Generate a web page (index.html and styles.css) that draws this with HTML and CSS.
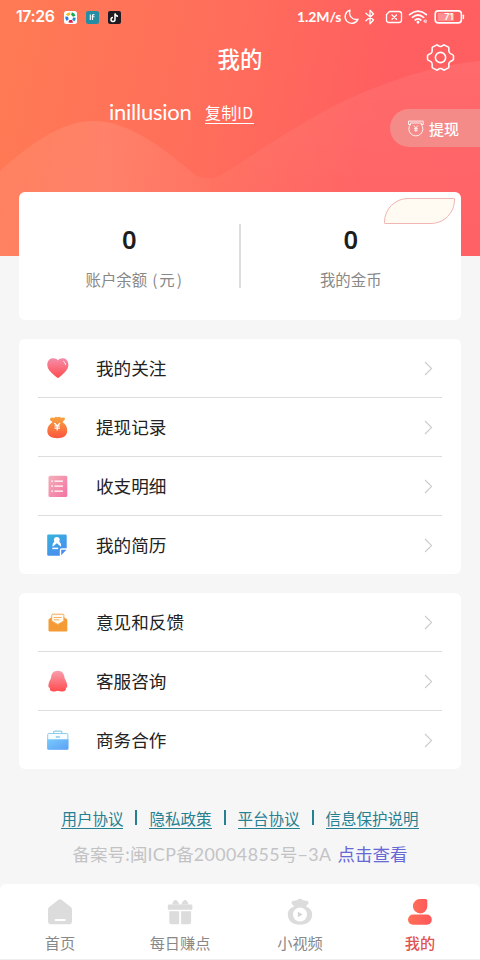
FILE: index.html
```html
<!DOCTYPE html>
<html lang="zh-CN">
<head>
<meta charset="utf-8">
<title>我的</title>
<link rel="stylesheet" href="styles.css">
</head>
<body>
<div class="screen">
  <header class="hero">
    <svg class="waves" viewBox="0 0 480 256" preserveAspectRatio="none">
      <defs>
        <linearGradient id="w1" x1="0" y1="0" x2="0" y2="1"><stop offset="0" stop-color="#fff" stop-opacity=".07"/><stop offset="1" stop-color="#fff" stop-opacity=".02"/></linearGradient>
        <linearGradient id="w2" x1="0" y1="0" x2="1" y2="0"><stop offset="0" stop-color="#fff" stop-opacity=".07"/><stop offset=".5" stop-color="#fff" stop-opacity=".1"/><stop offset="1" stop-color="#fff" stop-opacity=".05"/></linearGradient>
      </defs>
      <path fill="url(#w2)" d="M0 171C28 146 60 121 94 121C130 121 165 150 193 173Q201 180 210 178V256H0Z"/>
      <path fill="url(#w1)" d="M210 178Q216 178 221 175C260 151 310 115 364 92C405 75 445 64 480 61V256H210Z"/>
    </svg>
    <div class="status">
      <span class="time">17:26</span>
      <svg class="app" viewBox="0 0 13 13"><rect width="13" height="13" rx="2.5" fill="#fff"/><g fill="none" stroke-width="2.8"><path d="M3 4.4A4.2 4.2 0 0 1 6.2 2.6" stroke="#f4bd20"/><path d="M7.5 2.7A4.2 4.2 0 0 1 10.2 5.3" stroke="#16a55a"/><path d="M10.4 6.6A4.2 4.2 0 0 1 9.2 9.4" stroke="#248dd8"/><path d="M8.5 10.1A4.2 4.2 0 0 1 5 9.9" stroke="#d92046"/><path d="M3.8 9A4.2 4.2 0 0 1 2.7 5.6" stroke="#3478dc"/></g></svg>
      <svg class="app" viewBox="0 0 13 13"><rect width="13" height="13" rx="2" fill="#258da3"/><path d="M4.3 3.5V9M6.5 9V4.8Q6.5 3.4 8.4 3.7M5.7 5.7H8.5" fill="none" stroke="#fff" stroke-width="1.1"/></svg>
      <svg class="app" viewBox="0 0 13 13"><rect width="13" height="13" rx="2" fill="#201b20"/><path d="M7 2.4V8.6A2 2 0 1 1 5 6.6M7 2.4Q7.4 5 10 5.2" fill="none" stroke="#fff" stroke-width="1.5"/></svg>
      <span class="speed">1.2M/s</span>
      <svg class="sys" width="168" height="18" viewBox="0 0 168 18" fill="none" stroke="#fff" stroke-width="1.3" stroke-linejoin="round" stroke-linecap="round">
        <path d="M8 2.2A6.7 6.7 0 1 0 16 11.2C10.7 12.7 6.3 7.9 8 2.2Z"/>
        <path d="M24 5.3L31.5 12L28 15.7V2.3L31.5 6L24 12.7"/>
        <path d="M47.5 3.5H57Q59.5 3.5 59.5 6V12Q59.5 14.5 57 14.5H47Q44.5 14.5 44.5 12V6.5Z"/><path d="M50 7L54.5 11.2M54.5 7L50 11.2"/>
        <path d="M67.6 6.6Q76 -.3 84.4 6.6M70.4 9.3Q76 4.7 81.6 9.3M73.2 12Q76 9.7 78.8 12" stroke-width="1.7"/><circle cx="76" cy="14.2" r=".8" fill="#fff"/>
        <path d="M82 13.2H84.6Q84.4 11.5 83 11.8Q81.6 12.3 82.1 13.8Q82.8 15.3 84.5 14.4" stroke-width=".7"/>
        <rect x="93.2" y="2.9" width="26.2" height="12" rx="3.2" stroke-width="1.6"/><path d="M121.4 7.2V10.6" stroke-width="1.4"/><rect x="95.7" y="5" width="16.3" height="8" rx="1" fill="#fff" fill-opacity=".3" stroke="none"/>
        <text x="106.8" y="12.2" text-anchor="middle" class="battery">71</text>
      </svg>
    </div>
    <h1 class="title">我的</h1>
    <svg class="gear" viewBox="0 0 32 32" fill="none" stroke="#fff" stroke-width="1.6" stroke-linejoin="round"><path d="M11.8 3.2C13 2.2 13.5 4.6 16 4.6S19 2.2 20.2 3.2L24.2 5.3C25.6 6.5 23.7 8 25 10.6S29.4 12.5 29.4 14.2V17.8C29.4 19.5 26.3 19 25 21.4S25.6 25.5 24.2 26.7L20.2 28.8C19 29.8 18.5 27.4 16 27.4S13 29.8 11.8 28.8L7.8 26.7C6.4 25.5 8.3 24 7 21.4S2.6 19.5 2.6 17.8V14.2C2.6 12.5 5.7 13 7 10.6S6.4 6.5 7.8 5.3Z"/><circle cx="16" cy="16" r="5.3"/></svg>
    <div class="user"><span class="name">inillusion</span><a class="copy">复制ID</a></div>
    <div class="withdraw">
      <svg width="18" height="18" viewBox="0 0 18 18" fill="none" stroke="#fff" stroke-opacity=".85"><path d="M3.4 5.5H1.5V2.1H16.2V5.5H14.3"/><path d="M3.4 4H14.3M3.4 4V5.5A7 7 0 1 0 14.3 5.5V4"/><path d="M6.9 6.5L8.9 9L10.9 6.5M7 9.4H10.8M7 11.2H10.8M8.9 9V13"/></svg>
      <span>提现</span>
    </div>
  </header>

  <section class="card balance">
    <div class="stat"><b>0</b><span>账户余额<i>(</i>元<i>)</i></span></div>
    <div class="stat"><b>0</b><span>我的金币</span></div>
    <div class="bubble"></div>
  </section>

  <section class="card menu">
    <div class="row"><svg class="icon" viewBox="0 0 24 24"><defs><linearGradient id="h" x1="0" y1="0" x2="0" y2="1"><stop stop-color="#f48daa"/><stop offset="1" stop-color="#ff4c4e"/></linearGradient></defs><path fill="url(#h)" d="M12 3.3C9.7.3 1.3 0 1.3 8C1.3 13 6.7 16.9 11 20.6Q12 21.4 13 20.6C17.2 16.9 22.4 13 22.4 8C22.4 0 14.1.3 12 3.3Z"/><path d="M17.6 4.4Q19.4 5.4 19.6 7.5" fill="none" stroke="#fff" stroke-opacity=".85" stroke-linecap="round"/></svg><span>我的关注</span><svg class="arrow" viewBox="0 0 9 15"><path d="M1 1L7.6 7.5L1 14"/></svg></div>
    <div class="row"><svg class="icon" viewBox="0 0 24 24"><defs><linearGradient id="b" x1="0" y1="0" x2="0" y2="1"><stop stop-color="#f8a540"/><stop offset="1" stop-color="#fa563f"/></linearGradient></defs><path fill="url(#b)" d="M6.5 6L4 4Q3.7 1.4 6.1 1.6L8.2 1.9Q9.5.2 11.3 1.2Q13.8 0 14.8 1.8L17.6 1.6Q19.8 1.8 18.5 4L16.5 6C20 8.4 21.4 11.4 21.2 15C21 20 17.3 22.2 11.3 22.2S1.4 20 1.3 15C1.2 11.4 3 8.4 6.5 6Z"/><path d="M8.4 7L11.2 10L14 7M11.2 9.5V14.5M8.5 10H13.9M8.5 12.2H13.9" fill="none" stroke="#fff" stroke-width="1.2"/></svg><span>提现记录</span><svg class="arrow" viewBox="0 0 9 15"><path d="M1 1L7.6 7.5L1 14"/></svg></div>
    <div class="row"><svg class="icon" viewBox="0 0 24 24"><defs><linearGradient id="d" x1="0" y1="0" x2="1" y2="1"><stop stop-color="#f4b0b9"/><stop offset="1" stop-color="#f471a2"/></linearGradient></defs><rect x="2.5" y=".7" width="18.8" height="21.3" rx="1.6" fill="url(#d)"/><path d="M5.3 6.2H7M8.5 6.2H17M5.3 11.2H7M8.5 11.2H17M5.3 16.2H7M8.5 16.2H17" stroke="#fff" stroke-width="1.2"/></svg><span>收支明细</span><svg class="arrow" viewBox="0 0 9 15"><path d="M1 1L7.6 7.5L1 14"/></svg></div>
    <div class="row"><svg class="icon" viewBox="0 0 24 24"><defs><linearGradient id="r" x1="0" y1="0" x2=".5" y2="1"><stop stop-color="#36b3df"/><stop offset="1" stop-color="#498eed"/></linearGradient></defs><path fill="url(#r)" d="M2.4 .5H19.5Q20.7 .5 20.7 1.7V14.3H15.5Q13.8 14.3 13.8 16V21.8H2.4Q1.2 21.8 1.2 20.5V1.7Q1.2 .5 2.4 .5ZM15.2 15.7H20.5L15.2 21.2Z"/><circle cx="10.8" cy="6" r="2.9" fill="#fff"/><path d="M8.4 7.7Q5.9 9.3 6.7 12.7L10.8 9.3L15 12.7Q15.6 9.3 13.2 7.7Z" fill="#fff"/><path d="M6.3 14.4H12.2" stroke="#fff" stroke-width="1.5"/></svg><span>我的简历</span><svg class="arrow" viewBox="0 0 9 15"><path d="M1 1L7.6 7.5L1 14"/></svg></div>
  </section>

  <section class="card menu">
    <div class="row"><svg class="icon" viewBox="0 0 24 24"><path d="M2.5 8.5L5.5 6H17.5L21.3 8.5V19.2Q21.3 20.5 20 20.5H3.7Q2.5 20.5 2.5 19.2Z" fill="#f49b36"/><path d="M5.7 4.2Q5.7 3.2 6.9 3.2H16.8Q17.9 3.2 17.9 4.3V10L11.8 13.5L5.7 10Z" fill="#fffaf1" stroke="#f2a957"/><path d="M7.7 6.5H15.5M7.7 8.8H13.2" stroke="#f3b36b"/></svg><span>意见和反馈</span><svg class="arrow" viewBox="0 0 9 15"><path d="M1 1L7.6 7.5L1 14"/></svg></div>
    <div class="row"><svg class="icon" viewBox="0 0 24 24"><defs><linearGradient id="q" x1="0" y1="0" x2="0" y2="1"><stop stop-color="#f79fad"/><stop offset="1" stop-color="#ff4c4e"/></linearGradient></defs><path fill="url(#q)" d="M11.8 .8C7.1 .8 5.2 4 5.1 8C4 10.4 2.2 13 2.4 16.3Q2.6 18.3 4 17.5C2.8 22.5 9 21.8 11.8 20.8C14.8 21.8 20.9 22.5 19.8 17.5Q21.2 18.3 21.3 16.3C21.3 13 19.6 10.4 18.5 8C18.3 4 16.3 .8 11.8 .8Z"/></svg><span>客服咨询</span><svg class="arrow" viewBox="0 0 9 15"><path d="M1 1L7.6 7.5L1 14"/></svg></div>
    <div class="row"><svg class="icon" viewBox="0 0 24 24"><defs><linearGradient id="c" x1="0" y1="0" x2="1" y2="1"><stop stop-color="#78cbfb"/><stop offset="1" stop-color="#5d9ff6"/></linearGradient></defs><path d="M7.5 5V4Q7.5 2.2 9 2.2H14.5Q16 2.2 16 4V5" fill="none" stroke="#8acbee" stroke-width="1.2"/><rect x="1.7" y="4.5" width="20.2" height="15.4" rx="1" fill="#f7fcff" stroke="#8dcdf0"/><path d="M1.2 10.2H22.4V19.6Q22.4 20.8 21.2 20.8H2.4Q1.2 20.8 1.2 19.6Z" fill="url(#c)"/><path d="M9.8 8H13.8" stroke="#76bee8" stroke-width="1.3"/></svg><span>商务合作</span><svg class="arrow" viewBox="0 0 9 15"><path d="M1 1L7.6 7.5L1 14"/></svg></div>
  </section>

  <div class="legal"><a>用户协议</a><i></i><a>隐私政策</a><i></i><a>平台协议</a><i></i><a>信息保护说明</a></div>
  <div class="record"><span>备案号:闽<em>ICP</em>备<em>20004855</em>号<em>−3A</em></span><a>点击查看</a></div>

  <nav class="tabs">
    <div class="tab"><svg viewBox="0 0 28 28"><path fill="#dcdcdc" d="M12.5 1.8Q14 .8 15.5 1.8L24.5 8.7Q26 9.8 26 11.6V23.2Q26 26.3 22.9 26.3H5.1Q2 26.3 2 23.2V11.6Q2 9.8 3.5 8.7Z"/><path d="M9.7 22H18.7" stroke="#fff" stroke-width="2.2" stroke-linecap="round"/></svg><span>首页</span></div>
    <div class="tab"><svg viewBox="0 0 28 28"><g fill="#dcdcdc"><path d="M6.2 6.5Q7.2 1.2 10.2 2Q12.2 3 13.4 6.5ZM15.2 6.5Q16.4 3 18.4 2Q21.4 1.2 22.4 6.5Z"/><path d="M3 6.5H25.2Q26.4 6.5 26.4 7.7V10.6Q26.4 11.8 25.2 11.8H3Q1.8 11.8 1.8 10.6V7.7Q1.8 6.5 3 6.5ZM3.3 13.3H13.2V26.3H5.3Q3.3 26.3 3.3 24.3ZM15.1 13.3H25.1V24.3Q25.1 26.3 23.1 26.3H15.1Z"/></g></svg><span>每日赚点</span></div>
    <div class="tab"><svg viewBox="0 0 28 28"><path fill="#dcdcdc" d="M8.2 8.5L5.7 5.8C5.1 3.7 6.2 2.5 8.4 2.7L11 2.2Q14-.7 17 2.2L20 2.7C22 2.4 23 3.8 22.3 5.8L19.8 8.5C23.8 9.7 26.2 12.6 26.2 16.3C26.2 22.8 21.4 26.8 14 26.8S1.8 22.8 1.8 16.3C1.8 12.6 4.2 9.7 8.2 8.5Z"/><circle cx="14" cy="16.5" r="7" fill="#fff"/><path d="M11.8 13.8L16.7 16.5L11.8 19.2Z" fill="#d4d4d4"/></svg><span>小视频</span></div>
    <div class="tab active"><svg viewBox="0 0 28 28"><defs><linearGradient id="m" x1="0" y1="0" x2="1" y2="0"><stop stop-color="#ff7056"/><stop offset="1" stop-color="#ff575c"/></linearGradient></defs><path d="M13.8 1H19.5Q21.3 1 21.3 2.8V8.5A7.2 7.2 0 1 1 13.8 1Z" fill="url(#m)"/><rect x="2" y="16.5" width="23.8" height="10.3" rx="5.1" fill="url(#m)"/></svg><span>我的</span></div>
  </nav>
</div>
</body>
</html>
```
FILE: styles.css
```css
* { box-sizing: border-box; }
body {
  margin: 0;
  background: #f6f6f6;
  font-family: "Noto Sans CJK SC", sans-serif;
  color: #222;
}
h1, b, i, em { margin: 0; font-weight: 400; font-style: normal; }
.screen {
  width: 480px;
  height: 960px;
  display: flex;
  flex-direction: column;
  overflow: hidden;
  background: #f6f6f6;
}
.hero {
  position: relative;
  height: 256px;
  flex: none;
  color: #fff;
  background: linear-gradient(102deg, #ff7b54 0%, #ff6d5b 45%, #ff5f60 75%, #ff5e62 100%);
}
.waves { position: absolute; inset: 0; width: 100%; height: 100%; }
.status {
  position: relative;
  display: flex;
  align-items: center;
  height: 34px;
  padding-left: 16px;
}
.time { flex: none; width: 48px; font: 600 15.8px/34px Inter, sans-serif; letter-spacing: -.35px; white-space: nowrap; }
.app { width: 13px; height: 13px; margin-right: 9px; flex: none; }
.speed { flex: none; margin-left: 167px; width: 45px; font: 700 14px/34px Lato, sans-serif; letter-spacing: -.1px; white-space: nowrap; }
.sys { flex: none; }
.battery { font: 600 9px Inter, sans-serif; fill: #fff; stroke: none; }
.title {
  position: relative;
  height: 50px;
  font-size: 22.4px;
  font-weight: 500;
  line-height: 48px;
  text-align: center;
}
.gear { position: absolute; left: 425px; top: 42px; width: 31px; height: 31px; }
.user { position: relative; display: flex; align-items: baseline; padding: 11px 0 0 109px; line-height: 34px; }
.name { width: 96px; font-family: Lato, sans-serif; font-size: 22px; letter-spacing: -.25px; }
.copy { font-size: 15.8px; line-height: 20px; border-bottom: 1.5px solid #fff; letter-spacing: .35px; position: relative; top: -1px; }
.withdraw {
  position: absolute;
  right: 0;
  top: 109px;
  width: 90px;
  height: 38px;
  padding-left: 17px;
  display: flex;
  align-items: center;
  gap: 4px;
  border-radius: 19px 0 0 19px;
  background: #f48b89;
  font-size: 15px;
  font-weight: 500;
}
.card { flex: none; width: 442px; margin: 0 19px; border-radius: 6px; background: #fff; }
.balance { position: relative; display: flex; height: 128px; margin-top: -64px; }
.stat { flex: 1; display: flex; flex-direction: column; align-items: center; padding-top: 29px; }
.stat:first-child { padding-right: 1px; }
.stat:first-child::after { content: ""; position: absolute; left: 220px; top: 32px; width: 1.5px; height: 64px; background: #ddd; }
.stat b { font: 600 25.5px/36px "Noto Sans", sans-serif; color: #1d1d1d; }
.stat span { margin-top: 11px; font-size: 15.4px; line-height: 22px; color: #888; }
.stat i { padding: 0 2px 0 5px; }
.stat i + i { padding: 0 0 0 2px; }
.stat:first-child span { padding-left: 9px; }
.bubble { position: absolute; left: 365px; top: 6px; width: 71px; height: 26px; border: 1.5px solid #f0b6b4; border-radius: 24px 1px 24px 1px; background: #fffbf2; }
.menu { margin-top: 19px; padding: 0 19px; }
.menu + .menu { margin-top: 19px; }
.row { display: flex; align-items: center; height: 59px; border-bottom: 1.5px solid #ddd; padding: 0 9px 0 8px; }
.row:last-child { border-bottom: 0; height: 58px; }
.icon { width: 24px; height: 24px; margin: 2px 26px 0 0; flex: none; }
.row span { flex: 1; font-size: 17.6px; line-height: 28px; }
.arrow { width: 9px; height: 15px; fill: none; stroke: #ccc; stroke-width: 1.1; }
.legal { display: flex; justify-content: center; margin-top: 39px; height: 22px; }
.legal a { font-size: 15.5px; line-height: 20px; color: #258092; border-bottom: 1.4px solid #258092; height: 21px; white-space: nowrap; }
.legal i { width: 2px; height: 15px; margin: 2px 12px 0; background: #258092; }
.record { display: flex; justify-content: center; gap: 6px; margin-top: 10px; font-size: 17.5px; line-height: 28px; color: #c3c3c5; white-space: nowrap; }
.record em { font-family: Lato, sans-serif; font-size: 17.8px; letter-spacing: .45px; }
.record a { color: #6668d6; font-size: 17.5px; }
.tabs { display: flex; height: 76px; margin-top: auto; border-radius: 6px 6px 0 0; border-bottom: 1px solid #eee; background: #fff; }
.tab { flex: 1; display: flex; flex-direction: column; align-items: center; padding-top: 14px; color: #888; }
.tab svg { width: 28px; height: 28px; }
.tab span { margin-top: 5px; font-size: 15.2px; line-height: 22px; }
.active { color: #df5550; }
.active span { font-weight: 500; }
```
